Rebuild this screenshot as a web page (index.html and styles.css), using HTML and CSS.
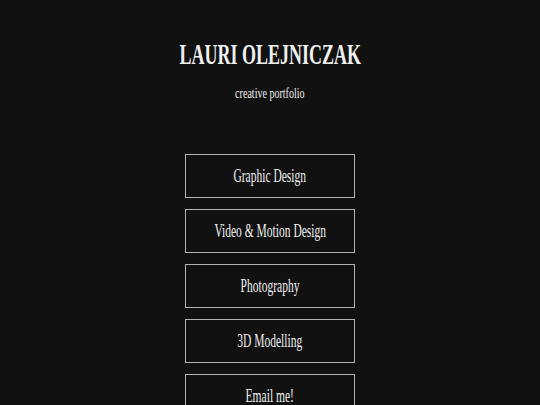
FILE: index.html
```html
<!DOCTYPE html>
<html>
<head>
<meta charset="utf-8">
<link rel="stylesheet" href="styles.css">
</head>
<body>
<header class="header">
  <h1 class="title"><span class="squeeze">LAURI OLEJNICZAK</span></h1>
  <p class="subtitle"><span class="squeeze">creative portfolio</span></p>
</header>
<nav class="menu">
  <a class="item" href="#"><span class="squeeze">Graphic Design</span></a>
  <a class="item" href="#"><span class="squeeze">Video &amp; Motion Design</span></a>
  <a class="item" href="#"><span class="squeeze">Photography</span></a>
  <a class="item" href="#"><span class="squeeze">3D Modelling</span></a>
  <a class="item" href="#"><span class="squeeze">Email me!</span></a>
</nav>
</body>
</html>
```
FILE: styles.css
```css
html, body {
  margin: 0;
  padding: 0;
  background: #111111;
  color: #f0f0f0;
  font-family: "Liberation Serif", "Times New Roman", serif;
  height: 100%;
  overflow: hidden;
}
.header {
  display: flex;
  flex-direction: column;
  align-items: center;
  padding-top: 39px;
}
.title {
  margin: 0;
  font-size: 29px;
  line-height: 30px;
  font-weight: bold;
}
.title .squeeze {
  transform: scaleX(0.62);
}
.subtitle {
  margin: 16px 0 0 0;
  font-size: 15px;
  line-height: 16px;
}
.subtitle .squeeze {
  transform: scaleX(0.67);
}
.squeeze {
  display: inline-block;
  white-space: nowrap;
}
.menu {
  display: flex;
  flex-direction: column;
  align-items: center;
  gap: 11px;
  margin-top: 53px;
}
.item {
  box-sizing: border-box;
  width: 170px;
  height: 44px;
  border: 1px solid #b4b4b4;
  display: flex;
  align-items: center;
  justify-content: center;
  color: #f0f0f0;
  text-decoration: none;
  font-size: 18px;
}
.item .squeeze {
  transform: scaleX(0.64);
}
```
